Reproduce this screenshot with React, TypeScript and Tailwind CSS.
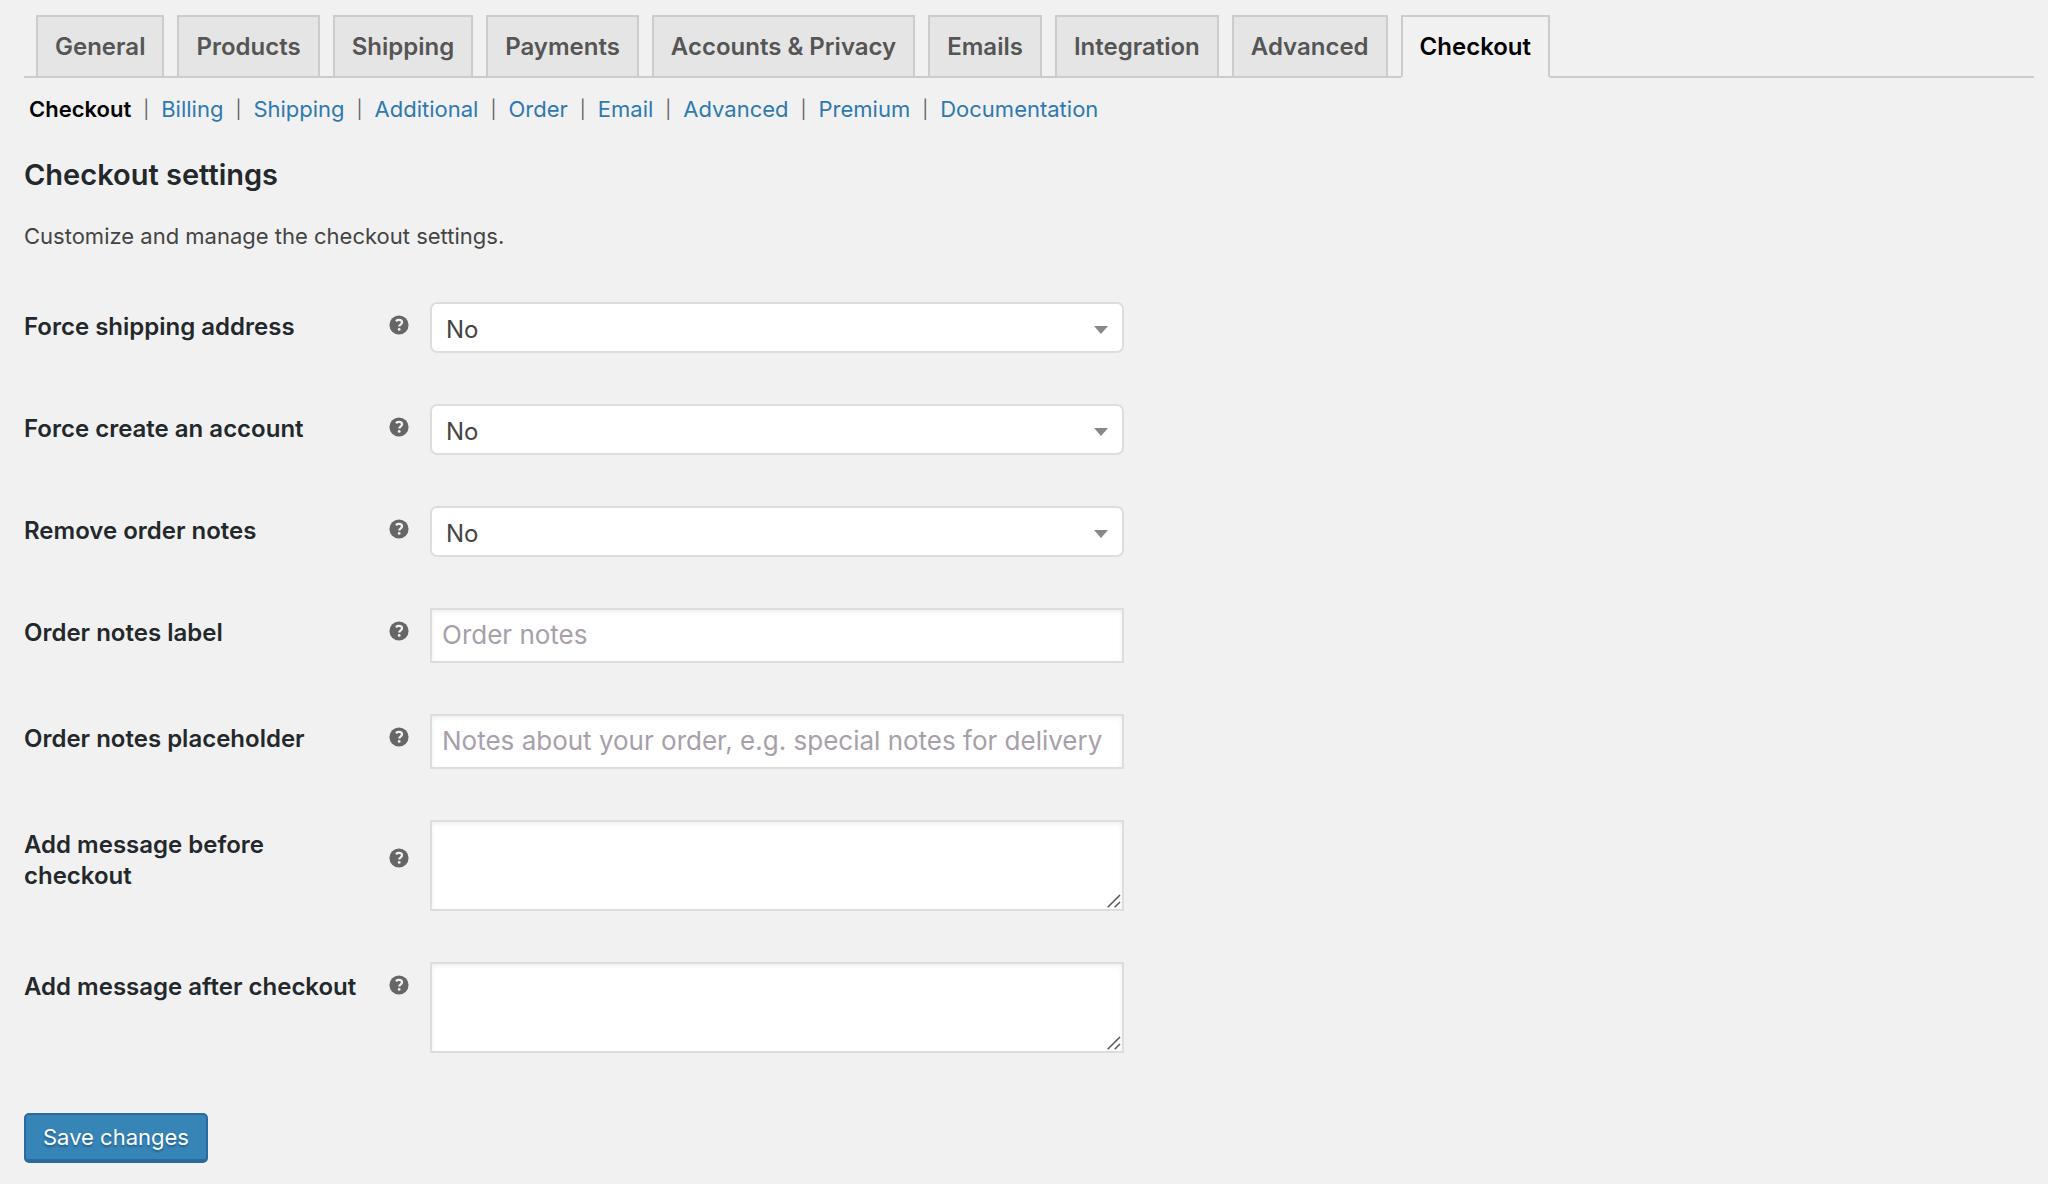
import { useState } from 'react'
import clsx from 'clsx'

const tabs = [
  'General',
  'Products',
  'Shipping',
  'Payments',
  'Accounts & Privacy',
  'Emails',
  'Integration',
  'Advanced',
  'Checkout'
]

const sections = [
  'Checkout',
  'Billing',
  'Shipping',
  'Additional',
  'Order',
  'Email',
  'Advanced',
  'Premium',
  'Documentation'
]

type Field = {
  id: string
  label: string
  type: 'select' | 'text' | 'textarea'
  placeholder?: string
}

const fields: Field[] = [
  { id: 'force_shipping', label: 'Force shipping address', type: 'select' },
  { id: 'force_account', label: 'Force create an account', type: 'select' },
  { id: 'remove_notes', label: 'Remove order notes', type: 'select' },
  { id: 'notes_label', label: 'Order notes label', type: 'text', placeholder: 'Order notes' },
  {
    id: 'notes_placeholder',
    label: 'Order notes placeholder',
    type: 'text',
    placeholder: 'Notes about your order, e.g. special notes for delivery'
  },
  { id: 'message_before', label: 'Add message before checkout', type: 'textarea' },
  { id: 'message_after', label: 'Add message after checkout', type: 'textarea' }
]

const boxClass =
  'block w-full border-2 border-[#ddd] bg-white text-[#32373c] shadow-[inset_0_2px_4px_rgba(0,0,0,0.07)] outline-none focus:border-[#5b9dd9]'

function HelpIcon() {
  return (
    <svg viewBox="0 0 20 20" className="mb-1 h-5 w-5 shrink-0" aria-hidden="true">
      <circle cx="10" cy="10" r="9.6" fill="#666" />
      <path
        d="M6.9 6.1C7.8 5.3 8.9 4.9 10.1 4.9c1.8 0 2.9.9 2.9 2.4 0 1.1-.6 1.7-1.5 2.3-.9.6-1.2.9-1.2 2"
        fill="none"
        stroke="#f1f1f1"
        strokeWidth="2.3"
      />
      <circle cx="10.2" cy="14.4" r="1.4" fill="#f1f1f1" />
    </svg>
  )
}

function FieldControl({ field }: { field: Field }) {
  const [value, setValue] = useState(field.type === 'select' ? 'no' : '')

  if (field.type === 'select') {
    return (
      <div className="relative">
        <select
          id={field.id}
          value={value}
          onChange={e => setValue(e.target.value)}
          className="block h-[51px] w-full appearance-none rounded-[7px] border-2 border-[#ddd] bg-white px-3.5 pt-1 text-2xl/[30px] text-[#444] outline-none focus:border-[#5b9dd9]"
        >
          <option value="no">No</option>
          <option value="yes">Yes</option>
        </select>
        <svg
          viewBox="0 0 14 8"
          className="pointer-events-none absolute top-6 right-4 h-2 w-3.5"
          aria-hidden="true"
        >
          <path d="M0 0h14L7 8z" fill="#888" />
        </svg>
      </div>
    )
  }

  if (field.type === 'textarea') {
    return (
      <div className="relative">
        <textarea
          id={field.id}
          value={value}
          onChange={e => setValue(e.target.value)}
          className={clsx(boxClass, 'h-[91px] resize-none px-2.5 py-1 text-2xl')}
        />
        {/* Resize grip */}
        <svg
          viewBox="0 0 14 14"
          className="pointer-events-none absolute right-[3px] bottom-[3px] h-3.5 w-3.5"
          aria-hidden="true"
        >
          <path d="M0.7 13.3L13 1M7.7 13.3L13 8" fill="none" stroke="#555" strokeWidth="1.5" />
        </svg>
      </div>
    )
  }

  return (
    <input
      id={field.id}
      type="text"
      value={value}
      placeholder={field.placeholder}
      onChange={e => setValue(e.target.value)}
      className={clsx(boxClass, 'h-[55px] px-2.5 pb-0.5 text-[26px] placeholder:text-[#a7a0ab]')}
    />
  )
}

export default function App() {
  const [activeTab, setActiveTab] = useState('Checkout')
  const [activeSection, setActiveSection] = useState('Checkout')

  return (
    <div className="min-h-screen bg-[#f1f1f1] pt-[15px] pr-3.5 pb-5 pl-6 font-['Inter',sans-serif] text-[#444]">
      {/* Tabs */}
      <nav className="flex gap-[13px] border-b-2 border-[#ccc] pl-3">
        {tabs.map(tab => (
          <a
            key={tab}
            href="#"
            onClick={() => setActiveTab(tab)}
            className={clsx(
              '-mb-0.5 border-2 border-[#ccc] px-[17px] pt-2.5 pb-[9px] text-2xl/[40px] font-semibold whitespace-nowrap',
              tab === activeTab ? 'border-b-[#f1f1f1] bg-[#f1f1f1] text-black' : 'bg-[#e5e5e5] text-[#555]'
            )}
          >
            {tab}
          </a>
        ))}
      </nav>

      {/* Sections */}
      <ul className="mt-[15px] flex pl-[5px] text-[22px]/[32px]">
        {sections.map((section, i) => (
          <li key={section} className="flex whitespace-nowrap">
            <a
              href="#"
              onClick={() => setActiveSection(section)}
              className={section === activeSection ? 'font-semibold text-black' : 'text-[#2e79b0]'}
            >
              {section}
            </a>
            {i < sections.length - 1 && (
              <span className="w-[30px] text-center text-lg/[34px] text-[#666]">|</span>
            )}
          </li>
        ))}
      </ul>

      <h2 className="mt-[30px] text-[29px]/[36px] font-semibold text-[#23282d]">Checkout settings</h2>
      <p className="mt-[27px] text-[22px]/[32px]">Customize and manage the checkout settings.</p>

      <form onSubmit={e => e.preventDefault()}>
        <div className="mt-[50px] flex flex-col gap-[51px]">
          {fields.map(field => (
            <div key={field.id} className="flex items-start">
              <div className="flex w-[406px] shrink-0 items-center justify-between pt-[9px] pr-[21px]">
                <label
                  htmlFor={field.id}
                  className="max-w-[345px] text-2xl/[31px] font-semibold text-[#23282d]"
                >
                  {field.label}
                </label>
                <HelpIcon />
              </div>
              <div className="w-full max-w-[694px]">
                <FieldControl field={field} />
              </div>
            </div>
          ))}
        </div>

        <button
          type="submit"
          className="mt-[60px] h-[50px] rounded-[5px] border-2 border-b-4 border-[#2a6a9c] bg-[#3784b7] px-[17px] text-[22px]/[40px] text-white text-shadow-[0_2px_2px_#1f5f90]"
        >
          Save changes
        </button>
      </form>
    </div>
  )
}
